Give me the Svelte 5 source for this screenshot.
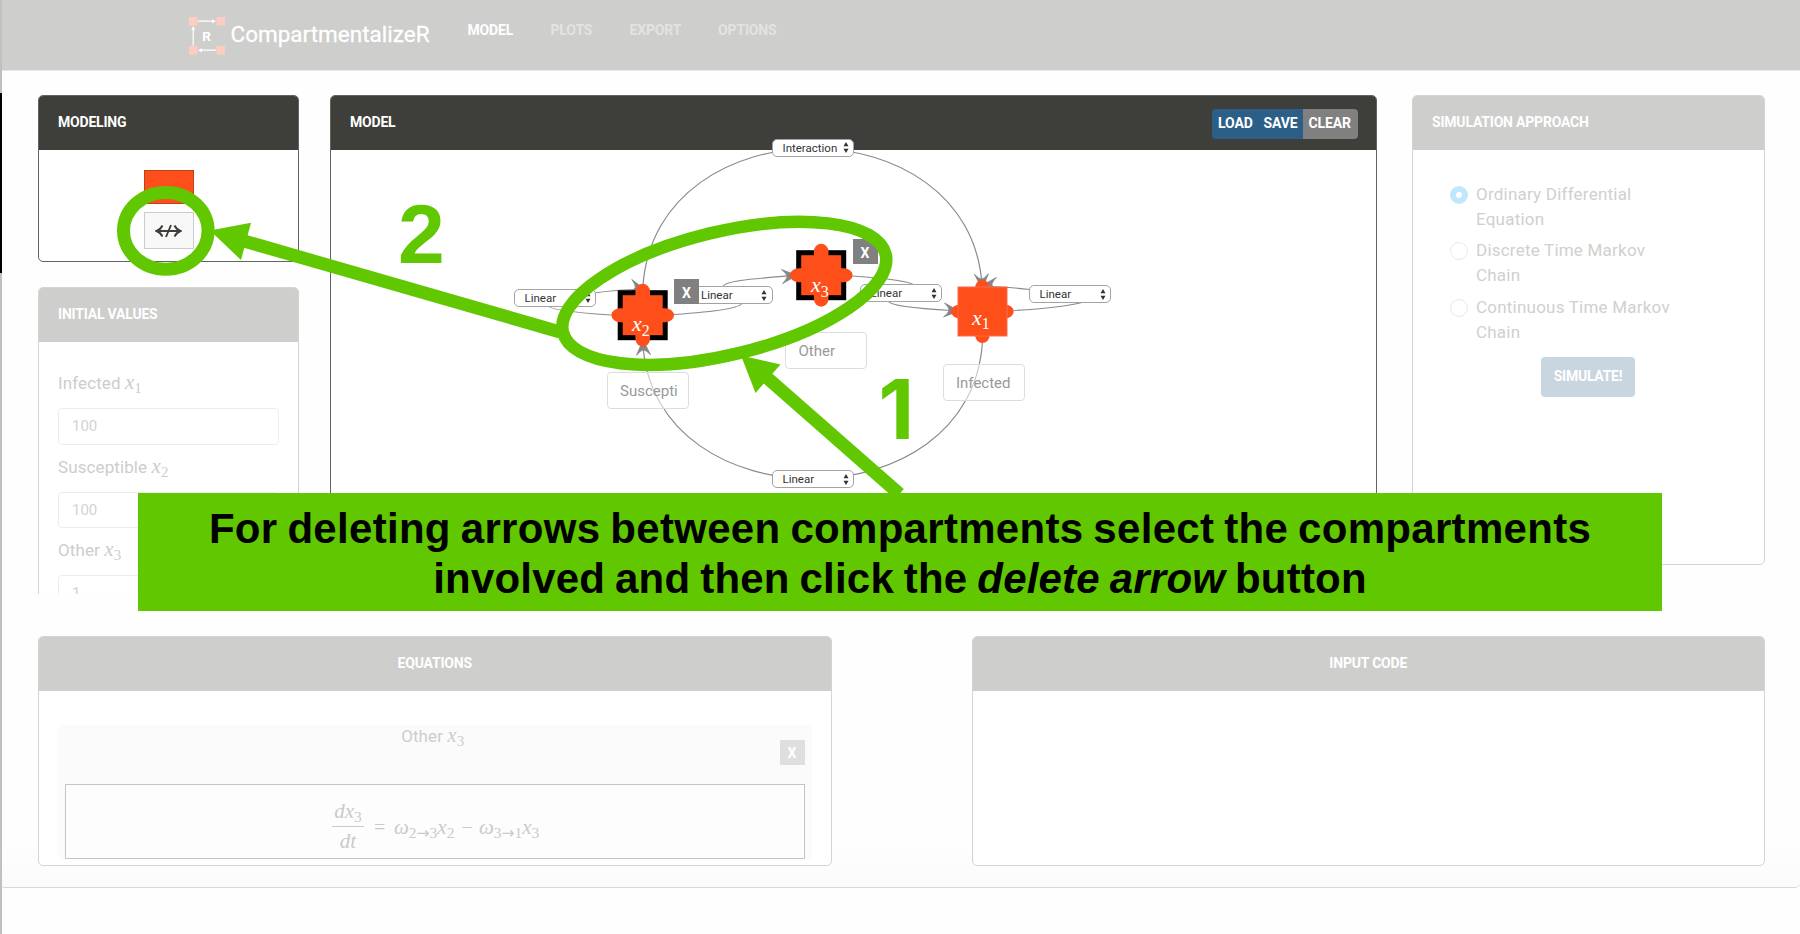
<script>
  const nav = [
    { label: 'MODEL', w: 63.5, active: true },
    { label: 'PLOTS', w: 79 },
    { label: 'EXPORT', w: 88.5 },
    { label: 'OPTIONS', w: 80 }
  ];
  const initial = [
    { name: 'Infected', n: 1, value: '100' },
    { name: 'Susceptible', n: 2, value: '100' },
    { name: 'Other', n: 3, value: '1' }
  ];
  const approaches = [
    { a: 'Ordinary Differential', b: 'Equation', on: true },
    { a: 'Discrete Time Markov', b: 'Chain' },
    { a: 'Continuous Time Markov', b: 'Chain' }
  ];
  const selects = [
    { x: 772, y: 138.5, t: 'Interaction' },
    { x: 514, y: 288.5, t: 'Linear' },
    { x: 690.5, y: 286.4, t: 'Linear' },
    { x: 860, y: 284, t: 'Linear' },
    { x: 1029, y: 285, t: 'Linear' },
    { x: 772, y: 470, t: 'Linear' }
  ];
  const names = [
    { x: 606.5, y: 372, t: 'Suscepti' },
    { x: 785, y: 332, t: 'Other' },
    { x: 942.5, y: 364, t: 'Infected' }
  ];
  const removers = [{ x: 674, y: 279 }, { x: 852.5, y: 239 }];
  const nodes = [
    { cx: 642.7, cy: 315.2, n: 2, tx: 632, ty: 331, picked: true },
    { cx: 821.2, cy: 275.2, n: 3, tx: 811, ty: 292, picked: true },
    { cx: 982.4, cy: 311.5, n: 1, tx: 972, ty: 324.5 }
  ];
  const heads = [
    [797, 275.5, -4], [959, 311, 4], [645, 289.5, 12], [982, 285.5, 176],
    [982, 289, 88], [643, 340, -92]
  ];
</script>

<div class="page">
  <header>
    <svg class="logo" width="37" height="38" viewBox="0 0 37 38">
      <g fill="#fdcdc1"><path d="M0 0h8.5v8.5H0zM27.5 0H36v8.5h-8.5zM0 29h8.5v8.5H0zM27.5 29H36v8.5h-8.5z" /></g>
      <g stroke="#fff" stroke-width="1.2"><path d="M9 4.2h15M4.2 28.500V12M27 33.200H12" /></g>
      <g fill="#fff"><path d="M27 4.200l-4-2v4zM4.200 9l-2 4h4zM9 33.200l4-2v4z" /></g>
      <text x="13.300" y="24.300" class="logoR">R</text>
    </svg>
    <span class="brand">CompartmentalizeR</span>
    <nav>
      {#each nav as item}
        <span class:active={item.active} style="width:{item.w + 'px'}">{item.label}</span>
      {/each}
    </nav>
  </header>

  <main>
    <div class="top">
      <aside>
        <section class="card dark tools">
          <h2>MODELING</h2>
          <div class="toolbody">
            <div class="swatch"></div>
            <div class="delarrow">
              <svg width="27" height="14" viewBox="0 0 27 14" fill="none" stroke="#3e3f3a" stroke-width="1.900">
                <path d="M1.500 7h24M7.500 1.500Q5.500 5.500 1.500 7Q5.500 8.500 7.500 12.500M19.500 1.500Q21.500 5.500 25.500 7Q21.500 8.500 19.500 12.500M16 1L11 13" />
              </svg>
            </div>
          </div>
        </section>
        <section class="card pale values">
          <h2>INITIAL VALUES</h2>
          <div class="fields">
            {#each initial as f}
              <div class="label">{f.name} <i>x</i><sub>{f.n}</sub></div>
              <div class="field">{f.value}</div>
            {/each}
          </div>
        </section>
      </aside>

      <section class="card dark model">
        <h2>MODEL</h2>
        <div class="buttons"><span class="load">LOAD</span><span class="save">SAVE</span><span class="clear">CLEAR</span></div>
      </section>

      <section class="card pale sim">
        <h2>SIMULATION APPROACH</h2>
        <div class="options">
          {#each approaches as o}
            <div class="option"><span class="radio" class:on={o.on}></span><div>{o.a}<br />{o.b}</div></div>
          {/each}
          <div class="simulate">SIMULATE!</div>
        </div>
      </section>
    </div>

    <div class="bottom">
      <section class="card pale">
        <h2 class="mid">EQUATIONS</h2>
        <div class="well">
          <div class="welltop">
            <div class="label">Other <i>x</i><sub>3</sub></div>
            <span class="close">X</span>
          </div>
          <div class="equation">
            <div class="frac"><div class="num"><i>dx</i><sub>3</sub></div><div><i>dt</i></div></div>
            <span class="eq">=</span>
            <span class="term"><i>ω</i><sub>2<span class="to">→</span>3</sub><i>x</i><sub>2</sub></span>
            <span class="minus">−</span>
            <span class="term"><i>ω</i><sub>3<span class="to">→</span>1</sub><i>x</i><sub>3</sub></span>
          </div>
        </div>
      </section>
      <section class="card pale">
        <h2 class="mid">INPUT CODE</h2>
      </section>
    </div>
  </main>

  <!-- diagram canvas -->
  <div class="canvas">
    <svg width="1800" height="934">
      <g fill="none" stroke="#8a8a8a" stroke-width="1.200">
        <path d="M643 285C657 103 970 103 982 285" />
        <path d="M643 345C655 524 972 524 982.500 341" />
        <path d="M674 314.500Q741 310 742 303M723 287C723 281 750 279 788 276" />
        <path d="M852 276C885 278 910 281 916 286M888 301C890 306 925 309 952 310.500" />
        <path d="M611 315C580 313 548 310 547 305M594 293Q615 290 640 289" />
        <path d="M1014 310.500Q1060 308 1084 302M1030 289.500Q1010 287 978 286" />
      </g>
      {#each heads as h}
        <path d="M0 0L-15 -7Q-10 -2.500-10 0Q-10 2.500-15 7Z" fill="#858585" stroke="#858585" stroke-width=".8" transform="translate({h[0]} {h[1]}) rotate({h[2]})" />
      {/each}
    </svg>
    {#each selects as s}
      <div class="select" style="left:{s.x + 'px'};top:{s.y + 'px'}">
        {s.t}
        <svg width="6" height="11" viewBox="0 0 6 11"><path d="M3 0L5.500 4.300H.5zM3 11L5.500 6.700H.5z" fill="#333" /></svg>
      </div>
    {/each}
    {#each names as n}
      <div class="nodename" style="left:{n.x + 'px'};top:{n.y + 'px'}">{n.t}</div>
    {/each}
    {#each removers as r}
      <div class="remove" style="left:{r.x + 'px'};top:{r.y + 'px'}">X</div>
    {/each}
    <svg width="1800" height="934">
      {#each nodes as n}
        <g fill="#fe4f1a">
          {#if n.picked}
            <rect x={n.cx - 22.5} y={n.cy - 22.5} width="45" height="45" stroke="#000" stroke-width="5" />
          {/if}
          <rect x={n.cx - 7.3} y={n.cy - 31.5} width="14.600" height="63" rx="7.300" ry="8" />
          <rect x={n.cx - 31.3} y={n.cy - 7} width="62.600" height="14" rx="9" ry="7" />
          {#if !n.picked}
            <rect x={n.cx - 24.4} y={n.cy - 24.5} width="49" height="49" stroke="#fb6a50" />
          {/if}
        </g>
        <text x={n.tx} y={n.ty} class="math">x<tspan dy="4.500" class="msub">{n.n}</tspan></text>
      {/each}
    </svg>
  </div>

  <!-- tutorial annotations -->
  <svg class="notes" width="1800" height="934">
    <g fill="none" stroke="#60c700">
      <ellipse cx="165.800" cy="230.800" rx="42.300" ry="38.400" stroke-width="13" />
      <ellipse cx="724.300" cy="293.300" rx="166" ry="61.600" stroke-width="12.500" transform="rotate(-13.600 724.300 293.300)" />
      <path d="M244 241L560 332M765 376L899.500 494" stroke-width="13" />
    </g>
    <g fill="#60c700">
      <path d="M210 230.500L251 222.700L241 260zM741 355.500L780.500 364.500L755.500 393z" />
      <text x="398" y="263.300" class="digit">2</text>
      <text x="878.500" y="439.300" class="digit one">1</text>
    </g>
  </svg>
  <div class="banner">
    <div class="l1">For deleting arrows between compartments select the compartments</div>
    <div class="l2">involved and then click the <em>delete arrow</em> button</div>
  </div>
  <div class="edge"></div>
</div>

<style>
  :global(body) { margin: 0; background: #fefefe; }
  .page { position: relative; width: 1800px; height: 934px; overflow: hidden; font-family: Roboto, sans-serif; background: #fefefe; box-sizing: border-box; }
  .page :global(*) { box-sizing: border-box; }
  header { height: 71px; background: #cececc; border-bottom: 1px solid #e8e8e8; display: flex; align-items: flex-start; padding-left: 189px; }
  .logo { margin-top: 17px; flex: none; }
  .logoR { font: 700 13.500px Roboto, sans-serif; fill: #fff; }
  .brand { margin: 19px 0 0 4.500px; width: 237px; font-size: 22.500px; line-height: 30px; color: #fff; -webkit-text-stroke: .3px #fff; white-space: nowrap; }
  nav { display: flex; }
  nav span { font-weight: 700; font-size: 14px; letter-spacing: -.15px; line-height: 20px; height: 70px; padding-top: 19.500px; color: #e3e3e2; flex: none; margin-right: 0; }
  nav span.active { color: #fff; margin-right: 19.500px; }
  main { height: 817px; border-bottom: 1px solid #d6d6d6; border-radius: 0 0 5px 5px; padding: 24px 35px 0 38px; background: linear-gradient(#fefefe 94%, #fbfbfb); }
  .top { display: flex; height: 541px; align-items: flex-start; }
  aside { width: 261px; height: 499px; overflow: hidden; margin-right: 31px; flex: none; display: flex; flex-direction: column; gap: 25px; }
  .card { border: 1px solid #d4d4d3; border-radius: 5px; background: #fff; overflow: hidden; }
  .card h2 { margin: 0; height: 54px; padding: 0 19px; line-height: 53px; font-size: 14px; font-weight: 700; letter-spacing: -.2px; color: #fff; background: #cececc; white-space: nowrap; }
  .card h2.mid { text-align: center; }
  .card.dark { border-color: #62635f; }
  .card.dark h2 { background: #3e3f3a; }
  .tools { height: 167px; flex: none; }
  .toolbody { display: flex; flex-direction: column; align-items: center; padding: 20px 0 0; gap: 8px; }
  .swatch { width: 50px; height: 34px; background: #fe4f1a; border: 1px solid #b8431f; }
  .delarrow { width: 50px; height: 37px; border: 1px solid #ccc; background: #f8f8f8; display: flex; align-items: center; justify-content: center; }
  .values { height: 360px; flex: none; }
  .fields { padding: 29px 19px 0; }
  .label { font-size: 17px; line-height: 26px; letter-spacing: .1px; color: #cdcdcb; white-space: nowrap; }
  .label i { font-family: "Liberation Serif", serif; font-size: 21px; line-height: 1; }
  .label sub { font-family: "Liberation Serif", serif; font-size: 15px; line-height: 0; vertical-align: -4px; }
  .fields .label { height: 37px; margin-top: -3px; margin-bottom: 3px; padding-top: 2px; }
  .field { height: 36.700px; border: 1px solid #ededed; border-radius: 4px; padding-left: 13px; font-size: 15px; line-height: 34px; color: #d3d3d3; margin-bottom: 10px; }
  .model { width: 1047px; height: 470px; margin-right: 35px; flex: none; display: grid; grid-template-rows: 54px 1fr; grid-template-columns: 881px 146px 1fr; position: relative; }
  .model h2 { grid-column: 1 / -1; grid-row: 1; }
  .buttons { grid-column: 2; grid-row: 1; margin-top: 13px; height: 30px; display: flex; color: #fff; font-weight: 700; font-size: 14px; line-height: 29px; letter-spacing: -.1px; border-radius: 4px; overflow: hidden; }
  .load { width: 45px; padding-left: 6px; background: #2b5f87; }
  .save { width: 45.500px; padding-left: 6.500px; background: #2b5f87; }
  .clear { width: 55.500px; padding-left: 6px; background: #808080; }
  .sim { width: 353px; height: 470px; flex: none; }
  .options { padding: 32px 37px 0; }
  .option { display: flex; gap: 8px; height: 56.300px; padding-top: 0; color: #d0d0ce; font-size: 17px; letter-spacing: .22px; line-height: 25px; white-space: nowrap; }
  .radio { width: 18px; height: 18px; margin-top: 4px; border: 1px solid #e9e9e9; border-radius: 50%; flex: none; }
  .radio.on { border: 6.500px solid #bfe7fd; }
  .simulate { width: 94px; height: 40px; margin: 6px 0 0 91px; background: #c9d6df; border-radius: 4px; color: #fff; font-weight: 700; font-size: 14px; letter-spacing: -.25px; line-height: 39px; text-align: center; }
  .bottom { display: flex; gap: 140px; }
  .bottom .card { width: 793.500px; height: 230px; flex: none; }
  .well { margin: 34px 19px 0; height: 134px; background: #fbfbfb; padding: 0 7px; }
  .welltop { height: 59px; position: relative; text-align: center; padding-right: 4px; }
  .welltop .label { line-height: 22px; }
  .close { position: absolute; right: 0; top: 15px; width: 25px; height: 25px; background: #dfdfdf; color: #fff; font-weight: 700; font-size: 14px; line-height: 27px; }
  .equation { height: 75px; border: 1.500px solid #c4c4c4; background: #fdfdfd; display: flex; align-items: center; padding: 8px 0 0 266px; font-family: "Liberation Serif", serif; font-size: 20px; color: #cacaca; white-space: nowrap; }
  .equation i { font-size: 21px; line-height: 1; }
  .equation sub { font-size: 15.500px; line-height: 0; vertical-align: -4px; }
  .to { font-family: "DejaVu Sans", sans-serif; font-size: 15.500px; }
  .frac { width: 32px; text-align: center; line-height: 28px; }
  .num { border-bottom: 1.500px solid #cacaca; height: 30px; }
  .eq, .minus, .term { position: relative; top: 2px; }
  .eq { margin-left: 10px; width: 20px; }
  .minus { width: 17.500px; margin-left: 7px; }
  .canvas, .notes { position: absolute; left: 0; top: 0; width: 1800px; height: 934px; }
  .canvas > svg { position: absolute; left: 0; top: 0; }
  .select { position: absolute; width: 82px; height: 18px; border: 1.500px solid #a3a3a3; border-radius: 5px; background: #fff; font-size: 11.500px; line-height: 16px; padding-left: 9.500px; color: #333; }
  .select svg { position: absolute; right: 4.500px; top: 2.500px; }
  .nodename { position: absolute; width: 82px; height: 37px; border: 1px solid #ddd; border-radius: 4px; background: rgba(255,255,255,.55); padding-left: 12.500px; font-size: 15px; line-height: 36px; color: #999; }
  .remove { position: absolute; width: 25px; height: 25px; background: #808080; color: #fff; font-weight: 700; font-size: 14px; line-height: 28px; text-align: center; }
  .math { font: italic 22px "Liberation Serif", serif; fill: #fff; }
  .msub { font-style: normal; font-size: 16px; }
  .digit { font: 700 84px "Liberation Sans", sans-serif; }
  .digit.one { font: 700 82.500px Inter, sans-serif; }
  .banner { position: absolute; left: 138px; top: 493px; width: 1524px; height: 118px; background: #60c700; font: 700 42px/50px "Liberation Sans", sans-serif; text-align: center; padding-top: 11px; color: #000; white-space: nowrap; letter-spacing: .3px; word-spacing: -2px; }
  .l2 { letter-spacing: .2px; }
  .edge { position: absolute; left: 0; top: 0; width: 1.500px; height: 934px; background: linear-gradient(#c0c0c0 0 93px, #000 93px 273px, #c0c0c0 273px); }
</style>
